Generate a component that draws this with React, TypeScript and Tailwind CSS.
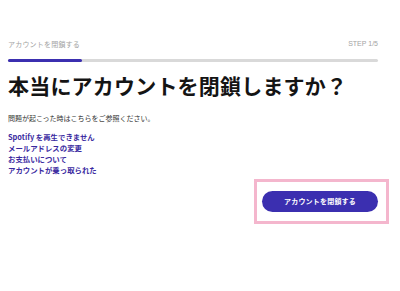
export default function App() {
  const links = [
    "Spotify を再生できません",
    "メールアドレスの変更",
    "お支払いについて",
    "アカウントが乗っ取られた",
  ];

  return (
    <div className="min-h-[291px] w-[400px] bg-white font-['Noto_Sans_CJK_JP','Noto_Sans',sans-serif]">
      <div className="ml-2 w-[370px] pt-[39px]">
        <div className="flex items-center justify-between text-[7px] leading-[10px] text-[#a3a3a3]">
          <span className="tracking-[0.2px]">アカウントを閉鎖する</span>
          <span className="font-['Liberation_Sans',sans-serif]">STEP 1/5</span>
        </div>
        <div className="mt-[10px] h-[3px] w-full rounded-full bg-[#d9d9d9]">
          <div className="h-full w-[74px] rounded-full bg-[#3b2fb0]" />
        </div>

        <h1 className="mt-[9px] text-[21px] font-bold leading-[28px] tracking-[0.2px] text-[#141414]">
          本当にアカウントを閉鎖しますか？
        </h1>

        <p className="mt-[14px] text-[7px] leading-[10px] text-[#333]">
          問題が起こった時はこちらをご参照ください。
        </p>

        <ul className="mt-[8px] text-[7.4px] font-bold leading-[11px] text-[#3a2a9f]">
          {links.map((l) => (
            <li key={l}>{l}</li>
          ))}
        </ul>

        <div className="mt-[16px] flex justify-end">
          <div className="relative">
            <button className="flex h-[21px] w-[116px] items-center justify-center rounded-full bg-[#3b2fb0] text-[7px] font-bold tracking-[0.2px] text-white">
              アカウントを閉鎖する
            </button>
            <div className="pointer-events-none absolute -left-[8px] -right-[11px] -top-[12px] -bottom-[12px] border-[3px] border-[#f4b6cd]" />
          </div>
        </div>
      </div>
    </div>
  );
}
